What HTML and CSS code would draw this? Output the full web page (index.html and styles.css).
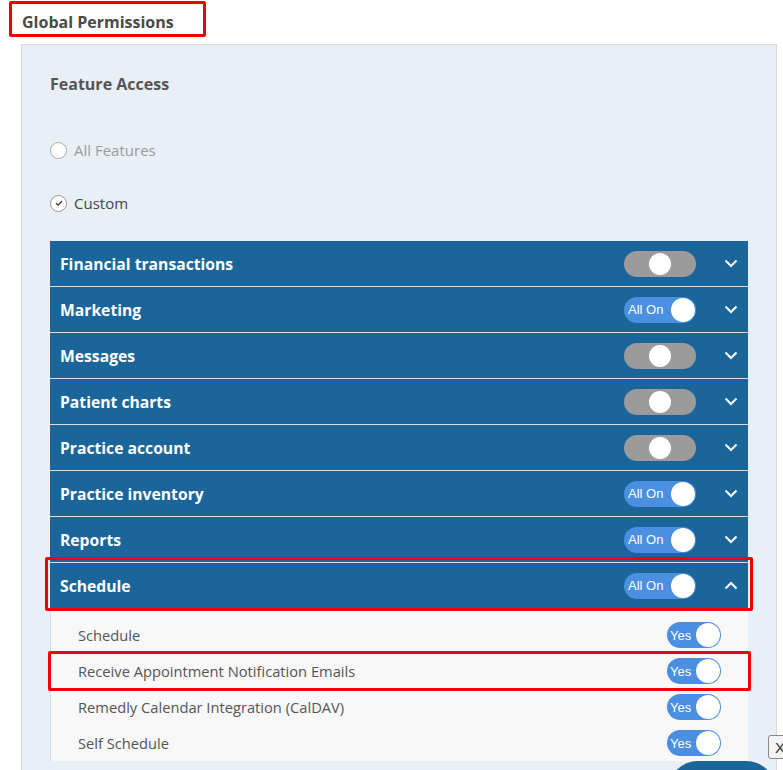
FILE: index.html
```html
<!DOCTYPE html>
<html>
<head lang="en">
    <meta charset="UTF-8">
    <title>Global Permissions</title>
    <link rel="stylesheet" href="styles.css">
</head>
<body>
    <div class="page-title">
        <h2>Global Permissions</h2>
        <span class="mark mark-title"></span>
    </div>
    <div class="panel">
        <h3 class="panel-title">Feature Access</h3>
        <div class="radio-list">
            <label class="radio radio-off"><span class="dot"></span>All Features</label>
            <label class="radio radio-on"><span class="dot"><svg width="10" height="10" viewBox="0 0 10 10"><path d="M2 5.2 L4.2 7.2 L8 3" fill="none" stroke="#333" stroke-width="1.3"/></svg></span>Custom</label>
        </div>

        <div class="groups">
            <div class="group">
                <span class="group-name">Financial transactions</span>
                <span class="switch switch-mid"><span class="knob"></span></span>
                <span class="chev"><svg width="14" height="9" viewBox="0 0 14 9"><path d="M1.5 1.5 L7 7 L12.5 1.5" fill="none" stroke="#fff" stroke-width="2"/></svg></span>
            </div>
            <div class="group">
                <span class="group-name">Marketing</span>
                <span class="switch switch-on">All On<span class="knob"></span></span>
                <span class="chev"><svg width="14" height="9" viewBox="0 0 14 9"><path d="M1.5 1.5 L7 7 L12.5 1.5" fill="none" stroke="#fff" stroke-width="2"/></svg></span>
            </div>
            <div class="group">
                <span class="group-name">Messages</span>
                <span class="switch switch-mid"><span class="knob"></span></span>
                <span class="chev"><svg width="14" height="9" viewBox="0 0 14 9"><path d="M1.5 1.5 L7 7 L12.5 1.5" fill="none" stroke="#fff" stroke-width="2"/></svg></span>
            </div>
            <div class="group">
                <span class="group-name">Patient charts</span>
                <span class="switch switch-mid"><span class="knob"></span></span>
                <span class="chev"><svg width="14" height="9" viewBox="0 0 14 9"><path d="M1.5 1.5 L7 7 L12.5 1.5" fill="none" stroke="#fff" stroke-width="2"/></svg></span>
            </div>
            <div class="group">
                <span class="group-name">Practice account</span>
                <span class="switch switch-mid"><span class="knob"></span></span>
                <span class="chev"><svg width="14" height="9" viewBox="0 0 14 9"><path d="M1.5 1.5 L7 7 L12.5 1.5" fill="none" stroke="#fff" stroke-width="2"/></svg></span>
            </div>
            <div class="group">
                <span class="group-name">Practice inventory</span>
                <span class="switch switch-on">All On<span class="knob"></span></span>
                <span class="chev"><svg width="14" height="9" viewBox="0 0 14 9"><path d="M1.5 1.5 L7 7 L12.5 1.5" fill="none" stroke="#fff" stroke-width="2"/></svg></span>
            </div>
            <div class="group">
                <span class="group-name">Reports</span>
                <span class="switch switch-on">All On<span class="knob"></span></span>
                <span class="chev"><svg width="14" height="9" viewBox="0 0 14 9"><path d="M1.5 1.5 L7 7 L12.5 1.5" fill="none" stroke="#fff" stroke-width="2"/></svg></span>
            </div>
            <div class="group group-open">
                <span class="group-name">Schedule</span>
                <span class="switch switch-on">All On<span class="knob"></span></span>
                <span class="chev"><svg width="14" height="9" viewBox="0 0 14 9"><path d="M1.5 7.5 L7 2 L12.5 7.5" fill="none" stroke="#fff" stroke-width="2"/></svg></span>
                <span class="mark mark-group"></span>
            </div>
            <div class="items">
                <div class="item">
                    <span>Schedule</span>
                    <span class="switch switch-yes">Yes<span class="knob"></span></span>
                </div>
                <div class="item">
                    <span>Receive Appointment Notification Emails</span>
                    <span class="switch switch-yes">Yes<span class="knob"></span></span>
                    <span class="mark mark-item"></span>
                </div>
                <div class="item">
                    <span>Remedly Calendar Integration (CalDAV)</span>
                    <span class="switch switch-yes">Yes<span class="knob"></span></span>
                </div>
                <div class="item">
                    <span>Self Schedule</span>
                    <span class="switch switch-yes">Yes<span class="knob"></span></span>
                </div>
            </div>
        </div>
    </div>
    <span class="close-tab">X</span>
    <span class="chat-bubble"></span>
</body>
</html>
```

FILE: styles.css
```css
body {
    margin: 0;
    background: #ffffff;
    font-family: "Open Sans", Lato, Arial, sans-serif;
    color: #4a4a4a;
    overflow: hidden;
    height: 770px;
    position: relative;
}

h2,
h3 {
    margin: 0;
    padding: 0;
}

.page-title {
    position: relative;
    height: 44px;
}

.page-title h2 {
    font-size: 16px;
    font-weight: 700;
    color: #4a4a4a;
    padding: 12px 0 0 22px;
    line-height: 20px;
}

.mark {
    position: absolute;
    border: 3px solid #f20000;
    border-radius: 2px;
    pointer-events: none;
}

.mark-title {
    left: 9px;
    top: 1px;
    width: 191px;
    height: 30px;
}

.panel {
    margin-left: 21px;
    width: 756px;
    height: 760px;
    border: 1px solid #d5d9dd;
    background: #e8eff6;
    padding: 0 28px;
    box-sizing: border-box;
}

.panel-title {
    font-size: 16px;
    font-weight: 700;
    color: #555555;
    padding-top: 29px;
    line-height: 20px;
}

.radio-list {
    display: flex;
    flex-direction: column;
    gap: 35px;
    margin-top: 47px;
}

.radio {
    display: flex;
    align-items: center;
    gap: 7px;
    font-size: 15px;
    line-height: 18px;
}

.radio-off {
    color: #9c9c9c;
}

.radio-on {
    color: #444444;
}

.dot {
    width: 15px;
    height: 15px;
    border: 1px solid #999;
    border-radius: 50%;
    background: #fff;
    display: flex;
    align-items: center;
    justify-content: center;
}

.radio-off .dot {
    border-color: #aaa;
}

.groups {
    margin-top: 29px;
}

.group {
    position: relative;
    height: 45px;
    background: #1a669b;
    border-bottom: 1px solid #d9dde2;
    display: flex;
    align-items: center;
    padding: 0 10px 0 10px;
    color: #ffffff;
}

.group-name {
    flex: 1;
    font-size: 15.7px;
    font-weight: 700;
}

.switch {
    position: relative;
    width: 72px;
    height: 26px;
    border-radius: 13px;
    box-sizing: border-box;
    display: flex;
    align-items: center;
    font-family: Arial, "Liberation Sans", sans-serif;
    font-size: 13px;
    color: #ffffff;
    padding-left: 4px;
}

.switch-mid {
    background: #9b9b9b;
    justify-content: center;
    padding-left: 0;
}

.switch-on,
.switch-yes {
    background: #4a8fe0;
}

.knob {
    width: 22px;
    height: 22px;
    border-radius: 50%;
    background: #ffffff;
}

.switch-on .knob,
.switch-yes .knob {
    position: absolute;
    right: 1px;
    top: 1px;
    width: 24px;
    height: 24px;
}

.chev {
    width: 14px;
    margin-left: 28px;
    display: flex;
}

.mark-group {
    left: -5px;
    right: -5px;
    top: -6px;
    bottom: -3px;
}

.items {
    background: #f8f8f8;
    border-left: 1px solid #dcdcdc;
    padding-top: 8px;
}

.item {
    position: relative;
    height: 36px;
    display: flex;
    align-items: center;
    justify-content: space-between;
    padding: 0 27px 0 27px;
    font-size: 14.7px;
    color: #555555;
}

.switch-yes {
    width: 54px;
    padding-left: 3px;
}

.mark-item {
    left: -3px;
    right: -3px;
    top: -2px;
    bottom: -2px;
}

.close-tab {
    position: absolute;
    left: 768px;
    top: 735px;
    width: 20px;
    height: 24px;
    border: 1px solid #888;
    border-radius: 3px;
    background: #f4f4f4;
    font-family: Arial, sans-serif;
    font-size: 15px;
    color: #333;
    padding-left: 6px;
    line-height: 24px;
    box-sizing: border-box;
}

.chat-bubble {
    position: absolute;
    left: 668px;
    top: 761px;
    width: 108px;
    height: 40px;
    border-radius: 30px 30px 0 0;
    background: #1a669b;
}
```
